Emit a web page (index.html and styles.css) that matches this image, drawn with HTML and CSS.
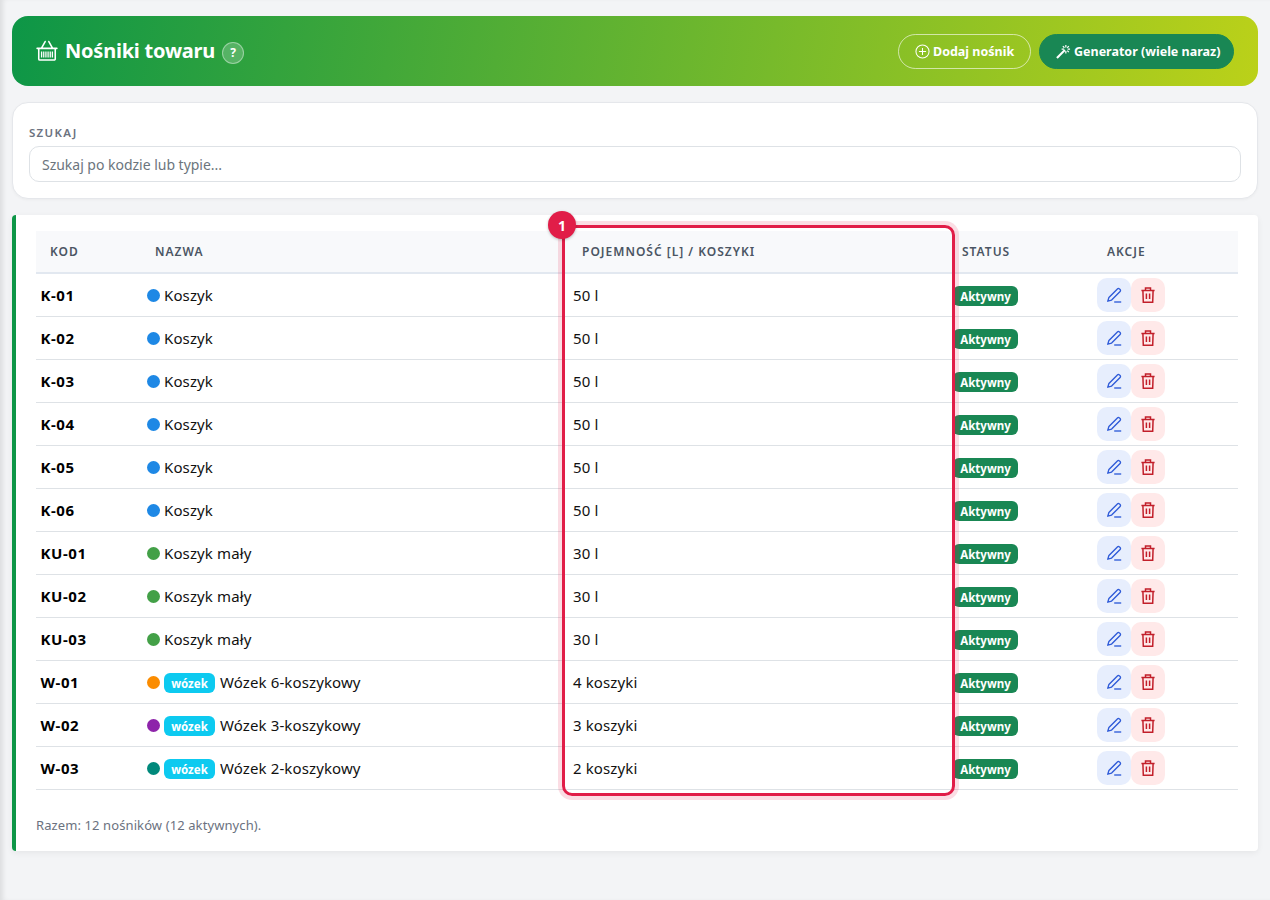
FILE: index.html
```html
<!DOCTYPE html>
<html lang="pl">
<head>
<meta charset="utf-8">
<title>Nośniki towaru</title>
<link rel="stylesheet" href="styles.css">
</head>
<body>
<svg class="defs" width="0" height="0" aria-hidden="true">
  <symbol id="i-edit" viewBox="0 0 16 16"><path d="M11.4 1.9a1.4 1.4 0 0 1 2 0l.7.7a1.4 1.4 0 0 1 0 2L5.6 13.1l-3.8 1.1 1.1-3.8z" fill="none" stroke="currentColor" stroke-width="1.35" stroke-linejoin="round"/><path d="M8.2 15h7" stroke="currentColor" stroke-width="1.35"/></symbol>
  <symbol id="i-trash" viewBox="0 0 16 16"><path d="M1.4 3.4h13.2M5.5 3.2V1h5v2.2M2.9 3.4l.4 11.8h9.4l.4-11.8M6.4 6.6v5.4M9.6 6.6v5.4" fill="none" stroke="currentColor" stroke-width="1.5"/></symbol>
</svg>
<header class="hero">
  <div class="hero-title">
    <svg class="basket" viewBox="0 0 24 22"><path d="M1.2 8.7h21.6M6 8.3 10 1.2M18 8.3 14 1.2M3 8.7v11.5a1.2 1.2 0 0 0 1.2 1.2h15.6a1.2 1.2 0 0 0 1.2-1.2V8.7" fill="none" stroke="currentColor" stroke-width="1.7" stroke-linecap="round"/><path d="M6 12v6.5M8 12v6.5M10 12v6.5M12 12v6.5M14 12v6.5M16 12v6.5M18 12v6.5" stroke="currentColor" stroke-width="1.2"/></svg>
    <h1>Nośniki towaru</h1>
    <span class="help">?</span>
  </div>
  <div class="hero-actions">
    <button class="btn btn-outline"><svg class="btn-icon" viewBox="0 0 16 16"><circle cx="8" cy="8" r="7" fill="none" stroke="currentColor" stroke-width="1.1"/><path d="M8 4.2v7.6M4.2 8h7.6" stroke="currentColor" stroke-width="1.1"/></svg>Dodaj nośnik</button>
    <button class="btn btn-solid"><svg class="btn-icon" viewBox="0 0 16 16"><path d="M1 15 9.5 6.5" stroke="currentColor" stroke-width="2.2"/><path d="M10.5 1v2.6M10.5 7.4V10M6 5.5h2.6M12.4 5.5H15M7.3 2.3 9 4M13.7 2.3 12 4M13.7 8.7 12 7" stroke="currentColor" stroke-width="1.3"/></svg>Generator (wiele naraz)</button>
  </div>
</header>

<section class="search-card">
  <label class="search-label" for="q">SZUKAJ</label>
  <input class="search-input" id="q" type="text" placeholder="Szukaj po kodzie lub typie...">
</section>

<section class="table-card">
  <div class="table-wrap">
    <table class="grid">
      <colgroup><col class="c-kod"><col class="c-name"><col class="c-cap"><col class="c-status"><col class="c-act"></colgroup>
      <thead><tr><th>KOD</th><th>NAZWA</th><th>POJEMNOŚĆ [L] / KOSZYKI</th><th>STATUS</th><th>AKCJE</th></tr></thead>
      <tbody>
        <tr><td class="code">K-01</td><td><div class="name"><span class="dot blue"></span>Koszyk</div></td><td>50 l</td><td><span class="status">Aktywny</span></td><td><div class="acts"><button class="ib ib-edit"><svg><use href="#i-edit"/></svg></button><button class="ib ib-del"><svg><use href="#i-trash"/></svg></button></div></td></tr>
        <tr><td class="code">K-02</td><td><div class="name"><span class="dot blue"></span>Koszyk</div></td><td>50 l</td><td><span class="status">Aktywny</span></td><td><div class="acts"><button class="ib ib-edit"><svg><use href="#i-edit"/></svg></button><button class="ib ib-del"><svg><use href="#i-trash"/></svg></button></div></td></tr>
        <tr><td class="code">K-03</td><td><div class="name"><span class="dot blue"></span>Koszyk</div></td><td>50 l</td><td><span class="status">Aktywny</span></td><td><div class="acts"><button class="ib ib-edit"><svg><use href="#i-edit"/></svg></button><button class="ib ib-del"><svg><use href="#i-trash"/></svg></button></div></td></tr>
        <tr><td class="code">K-04</td><td><div class="name"><span class="dot blue"></span>Koszyk</div></td><td>50 l</td><td><span class="status">Aktywny</span></td><td><div class="acts"><button class="ib ib-edit"><svg><use href="#i-edit"/></svg></button><button class="ib ib-del"><svg><use href="#i-trash"/></svg></button></div></td></tr>
        <tr><td class="code">K-05</td><td><div class="name"><span class="dot blue"></span>Koszyk</div></td><td>50 l</td><td><span class="status">Aktywny</span></td><td><div class="acts"><button class="ib ib-edit"><svg><use href="#i-edit"/></svg></button><button class="ib ib-del"><svg><use href="#i-trash"/></svg></button></div></td></tr>
        <tr><td class="code">K-06</td><td><div class="name"><span class="dot blue"></span>Koszyk</div></td><td>50 l</td><td><span class="status">Aktywny</span></td><td><div class="acts"><button class="ib ib-edit"><svg><use href="#i-edit"/></svg></button><button class="ib ib-del"><svg><use href="#i-trash"/></svg></button></div></td></tr>
        <tr><td class="code">KU-01</td><td><div class="name"><span class="dot green"></span>Koszyk mały</div></td><td>30 l</td><td><span class="status">Aktywny</span></td><td><div class="acts"><button class="ib ib-edit"><svg><use href="#i-edit"/></svg></button><button class="ib ib-del"><svg><use href="#i-trash"/></svg></button></div></td></tr>
        <tr><td class="code">KU-02</td><td><div class="name"><span class="dot green"></span>Koszyk mały</div></td><td>30 l</td><td><span class="status">Aktywny</span></td><td><div class="acts"><button class="ib ib-edit"><svg><use href="#i-edit"/></svg></button><button class="ib ib-del"><svg><use href="#i-trash"/></svg></button></div></td></tr>
        <tr><td class="code">KU-03</td><td><div class="name"><span class="dot green"></span>Koszyk mały</div></td><td>30 l</td><td><span class="status">Aktywny</span></td><td><div class="acts"><button class="ib ib-edit"><svg><use href="#i-edit"/></svg></button><button class="ib ib-del"><svg><use href="#i-trash"/></svg></button></div></td></tr>
        <tr><td class="code">W-01</td><td><div class="name"><span class="dot orange"></span><span class="tag">wózek</span>Wózek 6-koszykowy</div></td><td>4 koszyki</td><td><span class="status">Aktywny</span></td><td><div class="acts"><button class="ib ib-edit"><svg><use href="#i-edit"/></svg></button><button class="ib ib-del"><svg><use href="#i-trash"/></svg></button></div></td></tr>
        <tr><td class="code">W-02</td><td><div class="name"><span class="dot purple"></span><span class="tag">wózek</span>Wózek 3-koszykowy</div></td><td>3 koszyki</td><td><span class="status">Aktywny</span></td><td><div class="acts"><button class="ib ib-edit"><svg><use href="#i-edit"/></svg></button><button class="ib ib-del"><svg><use href="#i-trash"/></svg></button></div></td></tr>
        <tr><td class="code">W-03</td><td><div class="name"><span class="dot teal"></span><span class="tag">wózek</span>Wózek 2-koszykowy</div></td><td>2 koszyki</td><td><span class="status">Aktywny</span></td><td><div class="acts"><button class="ib ib-edit"><svg><use href="#i-edit"/></svg></button><button class="ib ib-del"><svg><use href="#i-trash"/></svg></button></div></td></tr>
      </tbody>
    </table>
    <div class="marker"><span class="marker-num">1</span></div>
  </div>
  <p class="summary">Razem: 12 nośników (12 aktywnych).</p>
</section>
</body>
</html>
```
FILE: styles.css
```css
* { box-sizing: border-box; }
html, body { height: 100%; }
body {
  margin: 0;
  padding: 16px 12px 0;
  height: 900px;
  overflow: hidden;
  background: #f3f4f6;
  box-shadow: inset 5px 0 5px -2px rgba(0,0,0,.09);
  font-family: "Noto Sans", "Open Sans", sans-serif;
  font-size: 15px;
  color: #111;
}
.defs { position: absolute; }
.hero {
  height: 70px;
  border-radius: 16px;
  background: linear-gradient(100deg, #0d9647 0%, #bbd119 100%);
  display: flex;
  align-items: center;
  justify-content: space-between;
  padding: 0 24px;
  color: #fff;
}
.hero-title { display: flex; align-items: center; }
.basket { width: 22px; height: 21px; margin-right: 7px; margin-top: -1px; }
.hero h1 { margin: 0; font-size: 20px; font-weight: 700; line-height: 28px; letter-spacing: -.22px; }
.help {
  width: 22px; height: 22px; margin-left: 7px; margin-top: 3px; border-radius: 50%;
  background: rgba(255,255,255,.2);
  border: 1px solid rgba(255,255,255,.4);
  display: flex; align-items: center; justify-content: center;
  font-size: 12px; font-weight: 700;
}
.hero-actions { display: flex; gap: 8px; }
.btn {
  height: 35px; border-radius: 18px; padding: 1px 16px 0;
  display: flex; align-items: center; gap: 3px;
  font: 700 12.5px "Noto Sans", sans-serif; color: #fff;
  white-space: nowrap;
}
.btn-outline { width: 133px; background: transparent; border: 1px solid rgba(255,255,255,.6); }
.btn-solid { width: 195px; background: #198754; border: 1px solid #198754; }
.btn-icon { width: 15px; height: 15px; flex: none; }
.search-card {
  margin-top: 16px; height: 97px;
  background: #fff; border: 1px solid #e5e7eb; border-radius: 16px;
  padding: 22px 16px 0;
  box-shadow: 0 1px 3px rgba(0,0,0,.04);
}
.search-label { display: block; font-size: 11.5px; font-weight: 600; letter-spacing: 1.3px; color: #6b7280; line-height: 15px; margin-bottom: 6px; }
.search-input {
  display: block; width: 100%; height: 36px;
  border: 1px solid #dee2e6; border-radius: 10px; padding: 0 12px;
  font: 14px "Noto Sans", sans-serif; letter-spacing: -.02px; color: #222; background: #fff; outline: 0;
}
.search-input::placeholder { color: #6c757d; opacity: 1; }
.table-card {
  margin-top: 16px; height: 636px;
  background: #fff; border-left: 4px solid #0d9647; border-radius: 4px;
  padding: 16px 20px 0;
  box-shadow: 0 2px 6px rgba(0,0,0,.06);
}
.table-wrap { position: relative; }
.grid { width: 100%; border-collapse: collapse; table-layout: fixed; }
.c-kod { width: 105px; }
.c-name { width: 427px; }
.c-cap { width: 380px; }
.c-status { width: 145px; }
.c-act { width: 145px; }
.grid th {
  height: 42px; padding: 0 14px; text-align: left;
  background: #f8f9fb; border-bottom: 2px solid #e2e8f0;
  font-size: 12px; font-weight: 600; letter-spacing: 1px; color: #4b5563;
  white-space: nowrap;
}
.grid td { height: 43px; padding: 0 5px; border-bottom: 1px solid #dee2e6; white-space: nowrap; letter-spacing: .12px; }
.grid .code { font-weight: 700; letter-spacing: .55px; color: #000; padding-left: 4.5px; }
.name { display: flex; align-items: center; }
.dot { width: 13px; height: 13px; border-radius: 50%; margin: 2px 4px 0 1px; flex: none; }
.blue { background: #1e88e5; }
.green { background: #43a047; }
.orange { background: #fb8c00; }
.purple { background: #8e24aa; }
.teal { background: #00897b; }
.tag {
  height: 20px; width: 51px; flex: none;
  display: flex; align-items: center; justify-content: center;
  background: #0dcaf0; color: #fff; border-radius: 6px;
  font-size: 11.5px; font-weight: 700; letter-spacing: 0; margin: 2px 5px 0 0; padding-top: 1px;
}
.status {
  height: 20px; width: 65px; margin-top: 2px;
  display: flex; align-items: center; justify-content: center;
  background: #198754; color: #fff; border-radius: 6px;
  font-size: 11.5px; font-weight: 700; letter-spacing: 0; padding-top: 1px;
}
.acts { display: flex; margin-left: -1px; }
.ib { width: 34px; height: 34px; padding: 0; border: 0; border-radius: 10px; display: flex; align-items: center; justify-content: center; }
.ib svg { width: 16px; height: 16px; }
.ib-edit { background: #e7eefd; color: #2f5bd8; }
.ib-del { background: #ffe9e9; color: #c21f2a; }
.marker {
  position: absolute; left: 526px; top: -6px; width: 393px; height: 571px;
  border: 3px solid #e11d48; border-radius: 10px;
  box-shadow: 0 0 0 4px rgba(225,29,72,.15);
  pointer-events: none;
}
.marker-num {
  position: absolute; left: -17px; top: -17px; width: 28px; height: 28px; border-radius: 50%;
  background: #e11d48; color: #fff; font-size: 14px; font-weight: 700; letter-spacing: 0;
  display: flex; align-items: center; justify-content: center;
  box-shadow: 0 1px 3px rgba(0,0,0,.25);
}
.summary { margin: 26px 0 0; font-size: 13px; letter-spacing: .1px; color: #6b7280; line-height: 18px; }
```
